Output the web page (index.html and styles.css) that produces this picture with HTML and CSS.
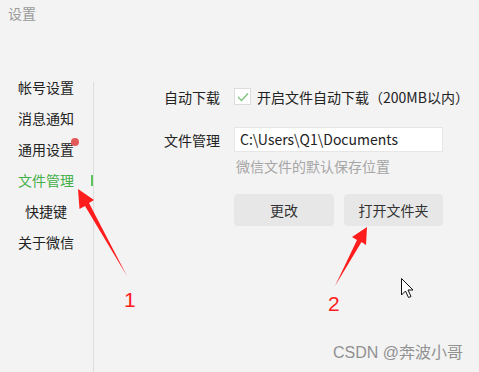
FILE: index.html
```html
<!DOCTYPE html>
<html lang="zh-CN">
<head>
  <meta charset="UTF-8">
  <title>设置</title>
  <link rel="stylesheet" href="styles.css">
</head>
<body>

  <!-- TITLE -->
  <div class="title">设置</div>

  <div class="layout">
    <!-- SIDEBAR -->
    <ul class="sidebar">
      <li><span>帐号设置</span></li>
      <li><span>消息通知</span></li>
      <li class="has-dot"><span>通用设置</span></li>
      <li class="active"><span>文件管理</span></li>
      <li><span>快捷键</span></li>
      <li><span>关于微信</span></li>
    </ul>

    <!-- MAIN CONTENT -->
    <div class="main">
      <div class="row">
        <span class="label">自动下载</span>
        <span class="checkbox">
          <svg width="12" height="10" viewBox="0 0 12 10"><path d="M1 5 L4.5 8.5 L11 1.5" fill="none" stroke="#7cc47c" stroke-width="1.3"/></svg>
        </span>
        <span class="check-text">开启文件自动下载（200MB以内）</span>
      </div>

      <div class="row row-path">
        <span class="label">文件管理</span>
        <div class="path-box">C:\Users\Q1\Documents</div>
      </div>
      <div class="hint">微信文件的默认保存位置</div>

      <div class="buttons">
        <button class="btn btn-change">更改</button>
        <button class="btn btn-open">打开文件夹</button>
      </div>
    </div>
  </div>

  <!-- ANNOTATIONS -->
  <svg class="marks" width="479" height="372" viewBox="0 0 479 372">
    <polygon points="78,189 94,200 89,203 127,276 85,206 79.5,209" fill="#ff1c1c"/>
    <polygon points="367,227 366,245 361.5,242 335,286 357,240 352,237" fill="#ff1c1c"/>
    <text x="124" y="307" class="num">1</text>
    <text x="328" y="311" class="num">2</text>
    <path d="M401.5 278.5 L401.5 295 L405.5 291 L408.5 297.5 L411 296.5 L408 290 L413 290 Z" fill="#fff" stroke="#111" stroke-width="1"/>
  </svg>

  <div class="watermark">CSDN @奔波小哥</div>

</body>
</html>
```

FILE: styles.css
```css
body {
  margin: 0;
  width: 479px;
  height: 372px;
  overflow: hidden;
  font-family: "Noto Sans CJK SC", "Noto Sans", sans-serif;
  font-size: 14px;
  background-color: #f3f3f3;
  color: #222;
  position: relative;
}

.title {
  padding: 3px 8px 0;
  line-height: 20px;
  color: #9a9a9a;
}

.layout {
  display: flex;
  margin-top: 49px;
  height: 300px;
}

.sidebar {
  list-style: none;
  margin: 0;
  padding: 0;
  width: 93px;
}

.sidebar li {
  position: relative;
  height: 31px;
  line-height: 31px;
  padding-left: 18px;
}

.sidebar li span {
  display: inline-block;
  width: 56px;
  text-align: center;
}

.sidebar li.active {
  color: #45b049;
}

.sidebar li.active::after {
  content: "";
  position: absolute;
  right: 0;
  top: 10px;
  width: 2px;
  height: 11px;
  background-color: #5cc45c;
}

.sidebar li.has-dot::after {
  content: "";
  position: absolute;
  left: 71px;
  top: 4px;
  width: 8px;
  height: 8px;
  border-radius: 50%;
  background-color: #e25a5a;
}

.main {
  flex: 1;
  margin-top: 10px;
  border-left: 1px solid #dddddd;
  padding: 6px 0 0 70px;
}

.row {
  display: flex;
  align-items: center;
  height: 17px;
}

.label {
  width: 70px;
  flex-shrink: 0;
}

.checkbox {
  width: 15px;
  height: 15px;
  border: 1px solid #dcdcdc;
  background: white;
  display: flex;
  align-items: center;
  justify-content: center;
  margin-right: 6px;
}

.row-path {
  margin-top: 22px;
  height: 25px;
}

.path-box {
  width: 202px;
  height: 23px;
  line-height: 23px;
  border: 1px solid #e6e6e6;
  background: white;
  padding-left: 5px;
  font-size: 14px;
}

.hint {
  margin: 4px 0 0 72px;
  line-height: 20px;
  color: #a6a6a6;
}

.buttons {
  display: flex;
  gap: 10px;
  margin: 18px 0 0 70px;
}

.btn {
  width: 100px;
  height: 32px;
  border: none;
  border-radius: 4px;
  background-color: #e7e7e7;
  font-family: inherit;
  font-size: 14px;
  color: #333;
}

.btn-open {
  width: 99px;
}

.marks {
  position: absolute;
  left: 0;
  top: 0;
}

.num {
  font-family: "Liberation Sans", sans-serif;
  font-size: 21px;
  fill: #ff1c1c;
}

.watermark {
  position: absolute;
  right: 16px;
  top: 342px;
  font-family: "Liberation Sans", "Noto Sans CJK SC", sans-serif;
  font-size: 16px;
  line-height: 22px;
  color: #919191;
}
```
